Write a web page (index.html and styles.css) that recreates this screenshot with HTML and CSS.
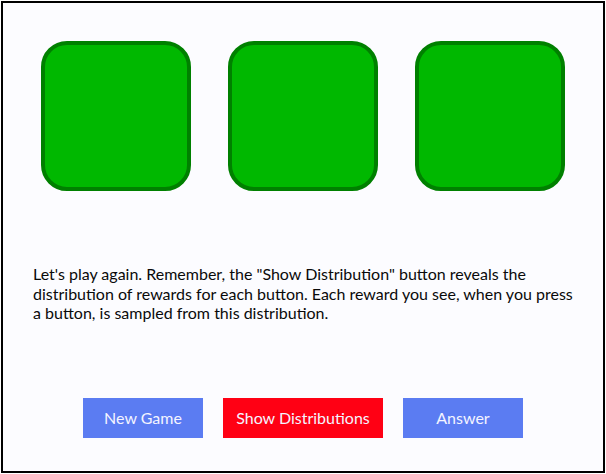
FILE: index.html
```html
<!DOCTYPE html>
<html>
<head>
<meta charset="utf-8">
<link rel="stylesheet" href="styles.css">
</head>
<body>
<div class="frame">
  <div class="boxes">
    <div class="box"></div>
    <div class="box"></div>
    <div class="box"></div>
  </div>
  <p class="msg">Let's play again. Remember, the "Show Distribution" button reveals the distribution of rewards for each button. Each reward you see, when you press a button, is sampled from this distribution.</p>
  <div class="buttons">
    <button class="btn blue">New Game</button>
    <button class="btn red">Show Distributions</button>
    <button class="btn blue">Answer</button>
  </div>
</div>
</body>
</html>
```
FILE: styles.css
```css
html, body {
  margin: 0;
  padding: 0;
  background: #ffffff;
}
.frame {
  box-sizing: border-box;
  width: 604px;
  height: 472px;
  margin: 1px;
  border: 2px solid #000;
  background: #fcfcff;
  font-family: Lato, "Noto Sans", sans-serif;
  padding-top: 38px;
}
.boxes {
  display: flex;
  justify-content: center;
  gap: 37px;
}
.box {
  box-sizing: border-box;
  width: 150px;
  height: 150px;
  border-radius: 26px;
  border: 4px solid #008000;
  background: #00b800;
}
.msg {
  margin: 73px 0 0 30px;
  width: 545px;
  font-size: 16px;
  line-height: 19.5px;
  color: #0a0a0a;
}
.buttons {
  display: flex;
  justify-content: center;
  gap: 20px;
  margin-top: 75px;
}
.btn {
  border: none;
  height: 40px;
  font-family: Lato, "Noto Sans", sans-serif;
  font-size: 16px;
  color: #f4f4ff;
  padding: 0;
}
.blue {
  width: 120px;
  background: #5b7cf2;
}
.red {
  width: 160px;
  background: #ff0014;
}
```
